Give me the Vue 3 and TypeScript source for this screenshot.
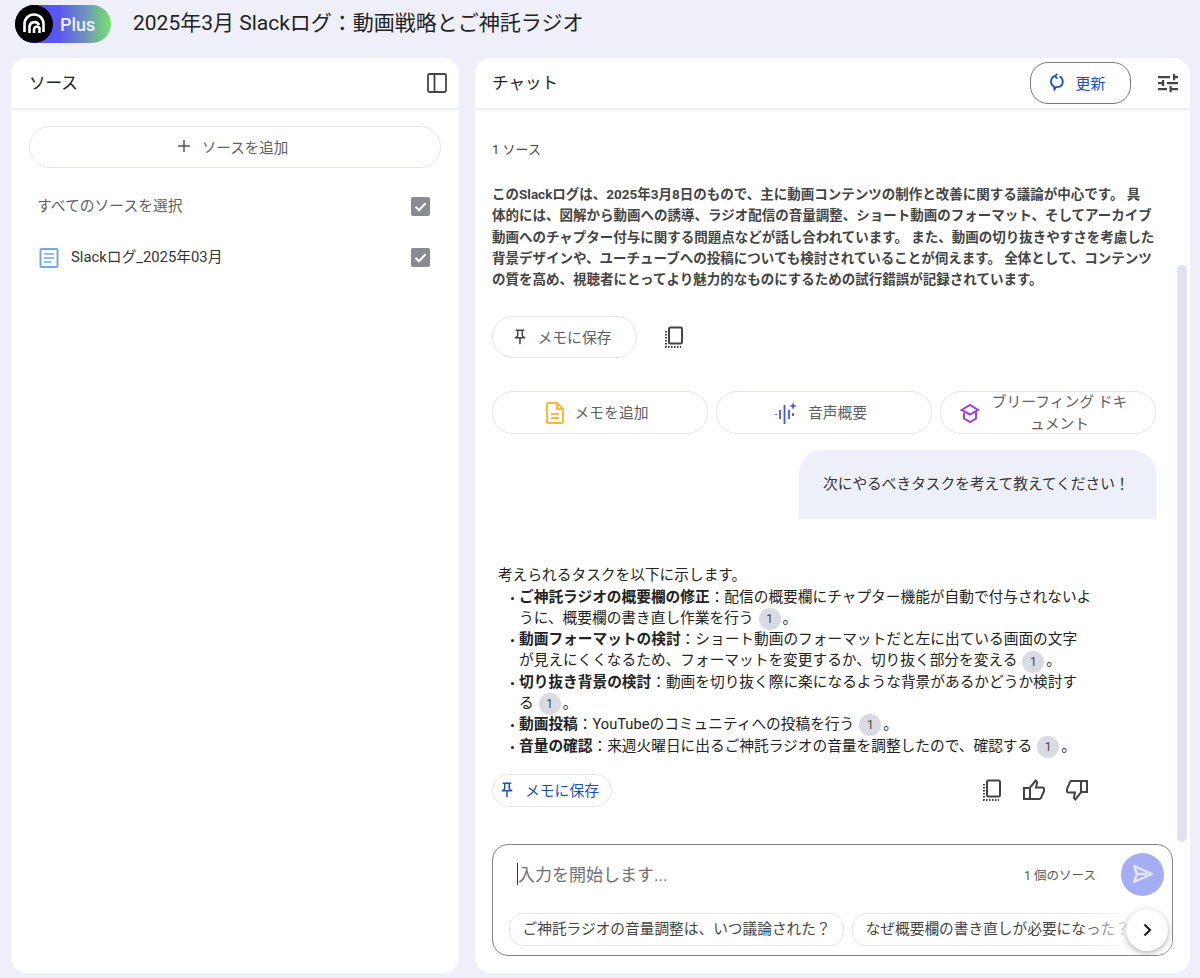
<script setup lang="ts">
interface Task {
  title: string
  lines: string[]
}

const summaryLines: string[] = [
  'このSlackログは、2025年3月8日のもので、主に動画コンテンツの制作と改善に関する議論が中心です。 具',
  '体的には、図解から動画への誘導、ラジオ配信の音量調整、ショート動画のフォーマット、そしてアーカイブ',
  '動画へのチャプター付与に関する問題点などが話し合われています。 また、動画の切り抜きやすさを考慮した',
  '背景デザインや、ユーチューブへの投稿についても検討されていることが伺えます。 全体として、コンテンツ',
  'の質を高め、視聴者にとってより魅力的なものにするための試行錯誤が記録されています。'
]

const tasks: Task[] = [
  {
    title: 'ご神託ラジオの概要欄の修正',
    lines: ['：配信の概要欄にチャプター機能が自動で付与されないよ', 'うに、概要欄の書き直し作業を行う']
  },
  {
    title: '動画フォーマットの検討',
    lines: ['：ショート動画のフォーマットだと左に出ている画面の文字', 'が見えにくくなるため、フォーマットを変更するか、切り抜く部分を変える']
  },
  {
    title: '切り抜き背景の検討',
    lines: ['：動画を切り抜く際に楽になるような背景があるかどうか検討す', 'る']
  },
  { title: '動画投稿', lines: ['：YouTubeのコミュニティへの投稿を行う'] },
  { title: '音量の確認', lines: ['：来週火曜日に出るご神託ラジオの音量を調整したので、確認する'] }
]
</script>

<template>
  <div class="page">
    <header class="topbar">
      <div class="logo">
        <span class="logo-mark">
          <svg width="24" height="22" viewBox="0 0 24 22" fill="none" stroke="#fff" stroke-width="2.600">
            <path d="M2.500 19v-8a9.500 9.500 0 0 1 19 0v8" />
            <path d="M7.500 20v-6.500a5 5 0 0 1 9.500-1.500" />
            <path d="M12 20v-3.500a3 3 0 0 1 5.500-1.500v5" />
          </svg>
        </span>
        <span class="logo-plus">Plus</span>
      </div>
      <h1 class="title">2025年3月 Slackログ：動画戦略とご神託ラジオ</h1>
    </header>

    <main class="columns">
      <section class="panel">
        <div class="panel-head">
          <span class="panel-title">ソース</span>
          <svg width="22" height="22" viewBox="0 0 22 22" fill="none" stroke="#444" stroke-width="1.800">
            <rect x="2" y="2" width="18" height="18" rx="1.500" />
            <path d="M8.500 2v18" />
          </svg>
        </div>
        <div class="sources">
          <button class="add-source">
            <svg width="14" height="14" viewBox="0 0 14 14" stroke="#555" stroke-width="1.500">
              <path d="M7 1v12M1 7h12" />
            </svg>
            <span>ソースを追加</span>
          </button>
          <div class="select-all">
            <span class="row-text">すべてのソースを選択</span>
            <span class="check">
              <svg width="19" height="19" viewBox="0 0 19 19" fill="none" stroke="#fff" stroke-width="2">
                <path d="M4.500 9.800l3.400 3.400 6.600-7" />
              </svg>
            </span>
          </div>
          <div class="source-row">
            <svg class="doc" width="22" height="22" viewBox="0 0 22 22" fill="none" stroke="#7ba3ec" stroke-width="2">
              <rect x="2.500" y="2" width="17" height="18" rx="1" />
              <path d="M6 7h10M6 11h10M6 15h7" stroke-width="1.600" />
            </svg>
            <span class="source-name row-text">Slackログ_2025年03月</span>
            <span class="check">
              <svg width="19" height="19" viewBox="0 0 19 19" fill="none" stroke="#fff" stroke-width="2">
                <path d="M4.500 9.800l3.400 3.400 6.600-7" />
              </svg>
            </span>
          </div>
        </div>
      </section>

      <section class="panel chat">
        <div class="panel-head chat-head">
          <span class="panel-title">チャット</span>
          <div class="head-actions">
            <button class="refresh">
              <svg width="18" height="18" viewBox="0 0 18 18" fill="none" stroke="#1d4fb8" stroke-width="1.800">
                <path d="M11.500 3.200A6 6 0 0 1 12 13.600l-4 .4-1.500 2.500-.6-3A6 6 0 0 1 6 3.200" />
                <path d="M9.500 .8L6.800 3.200l2.700 2.400" />
              </svg>
              <span>更新</span>
            </button>
            <svg class="tune" width="24" height="24" viewBox="0 0 24 24" fill="#444">
              <path d="M2 5h12v2.200H2zM17 3h2.200v2H22v2.200h-2.800v2H17zM2 11h4V9h2.200v6H6v-1.800H2zM11 11h11v2.200H11zM2 17h9v2.200H2zM13.500 15h2.200v2H22v2.200h-6.300v2h-2.200z" />
            </svg>
          </div>
        </div>

        <div class="chat-body">
          <div class="source-count">1 ソース</div>
          <div class="summary">
            <div v-for="line in summaryLines" :key="line">{{ line }}</div>
          </div>

          <div class="note-row">
            <button class="pill save">
              <svg width="18" height="18" viewBox="0 0 24 24" fill="#444">
                <path d="M14 4v5c0 1.120.370 2.160 1 3H9c.650-.860 1-1.900 1-3V4h4m3-2H7c-.550 0-1 .450-1 1s.450 1 1 1h1v5c0 1.660-1.340 3-3 3v2h5.970v7l1 1 1-1v-7H19v-2c-1.660 0-3-1.340-3-3V4h1c.550 0 1-.450 1-1s-.450-1-1-1z" />
              </svg>
              <span class="btn-text">メモに保存</span>
            </button>
            <svg class="copy-first" width="22" height="24" viewBox="0 0 22 24" fill="none" stroke="#444">
              <rect x="6" y="2.500" width="13" height="16" rx="1.500" stroke-width="2" />
              <path d="M3 6v16h15" stroke-width="2" stroke-dasharray="1.500 1.500" />
            </svg>
          </div>

          <div class="quick-actions">
            <button class="pill quick">
              <svg width="20" height="24" viewBox="0 0 20 24" fill="none" stroke="#f0bb3f" stroke-width="2">
                <path d="M3 2h9l6 6v13a1 1 0 0 1-1 1H3a1 1 0 0 1-1-1V3a1 1 0 0 1 1-1z" />
                <path d="M12 2v6h6M6 13h8M6 17h8" />
              </svg>
              <span class="btn-text">メモを追加</span>
            </button>
            <button class="pill quick">
              <svg width="24" height="24" viewBox="0 0 24 24" fill="none" stroke="#4658e0" stroke-width="1.800">
                <path d="M2 13v1M6 9v9M10.500 4v19M15 9v9M19 12v3" />
                <path d="M19 1l1 3 3 1-3 1-1 3-1-3-3-1 3-1z" fill="#4658e0" stroke="none" />
              </svg>
              <span class="btn-text">音声概要</span>
            </button>
            <button class="pill quick">
              <svg width="20" height="22" viewBox="0 0 20 22" fill="none" stroke="#a13ee0" stroke-width="2">
                <path d="M1.500 8L10 3l8 5-8 4.500z" />
                <path d="M4 11v5.500L10 20l6-3.500V9" />
              </svg>
              <span class="quick-long">ブリーフィング ドキュメント</span>
            </button>
          </div>

          <div class="bubble">次にやるべきタスクを考えて教えてください！</div>

          <div class="answer">
            <p class="answer-lead">考えられるタスクを以下に示します。</p>
            <ul class="task-list">
              <li v-for="task in tasks" :key="task.title">
                <div v-for="(line, i) in task.lines" :key="line">
                  <strong v-if="i === 0">{{ task.title }}</strong>{{ line }}<template v-if="i === task.lines.length - 1"><span class="cite">1</span>。</template>
                </div>
              </li>
            </ul>
          </div>

          <div class="answer-actions">
            <button class="pill save-blue">
              <svg width="18" height="18" viewBox="0 0 24 24" fill="#1d4fb8">
                <path d="M14 4v5c0 1.120.370 2.160 1 3H9c.650-.860 1-1.900 1-3V4h4m3-2H7c-.550 0-1 .450-1 1s.450 1 1 1h1v5c0 1.660-1.340 3-3 3v2h5.970v7l1 1 1-1v-7H19v-2c-1.660 0-3-1.340-3-3V4h1c.550 0 1-.450 1-1s-.450-1-1-1z" />
              </svg>
              <span class="btn-text">メモに保存</span>
            </button>
            <div class="answer-icons">
              <svg width="22" height="24" viewBox="0 0 22 24" fill="none" stroke="#444">
                <rect x="6" y="2.500" width="13" height="16" rx="1.500" stroke-width="2" />
                <path d="M3 6v16h15" stroke-width="2" stroke-dasharray="1.500 1.500" />
              </svg>
              <svg width="24" height="24" viewBox="0 0 24 24" fill="none" stroke="#444" stroke-width="2">
                <path d="M8 10H2v11h6zM8 21h9.500c.6 0 1.100-.4 1.400-.9l3-6.800c.1-.2.100-.5.100-.7V11a1.500 1.500 0 0 0-1.500-1.500h-6.500l1-4.600c.1-.5 0-1-.4-1.400L13.700 2.600 8 9.500z" />
              </svg>
              <svg class="flip" width="24" height="24" viewBox="0 0 24 24" fill="none" stroke="#444" stroke-width="2">
                <path d="M8 10H2v11h6zM8 21h9.500c.6 0 1.100-.4 1.400-.9l3-6.800c.1-.2.100-.5.100-.7V11a1.500 1.500 0 0 0-1.500-1.500h-6.500l1-4.600c.1-.5 0-1-.4-1.400L13.700 2.600 8 9.500z" />
              </svg>
            </div>
          </div>

          <div class="composer">
            <div class="composer-top">
              <span class="caret"></span>
              <span class="placeholder">入力を開始します...</span>
              <span class="composer-count">1 個のソース</span>
              <span class="send">
                <svg width="24" height="24" viewBox="0 0 24 24" fill="none" stroke="#e4e7fc" stroke-width="2.400" stroke-linejoin="round">
                  <path d="M3 4l18 8-18 8 3-8zM6 12h10" />
                </svg>
              </span>
            </div>
            <div class="suggestions">
              <span class="suggestion">ご神託ラジオの音量調整は、いつ議論された？</span>
              <span class="suggestion">なぜ概要欄の書き直しが必要になった？</span>
            </div>
            <div class="fade"></div>
            <span class="next">
              <svg width="16" height="16" viewBox="0 0 16 16" fill="none" stroke="#222" stroke-width="2.200">
                <path d="M5.500 2.500L11 8l-5.500 5.500" />
              </svg>
            </span>
          </div>
        </div>
        <div class="scrollbar"></div>
      </section>
    </main>
  </div>
</template>

<style scoped>
.page {
  height: 978px;
  display: flex;
  flex-direction: column;
  overflow: hidden;
  background: #eeeff9;
  font-family: Roboto, "Noto Sans CJK JP", sans-serif;
  color: #222;
}

button {
  font-family: inherit;
  background: #fff;
  cursor: pointer;
}

.topbar {
  height: 58px;
  padding: 5px 0 0 15px;
  box-sizing: border-box;
  display: flex;
  align-items: flex-start;
  gap: 22px;
}

.logo {
  width: 96px;
  height: 38px;
  display: flex;
  align-items: center;
  border-radius: 19px;
  background: linear-gradient(90deg, #5a55f5 45%, #6f8fc0 72%, #74e36c 100%);
}

.logo-mark {
  width: 38px;
  height: 38px;
  border-radius: 50%;
  background: #000;
  display: flex;
  align-items: center;
  justify-content: center;
}

.logo-plus {
  margin-left: 7px;
  font-size: 18px;
  font-weight: 500;
  color: #eef0ff;
}

.title {
  margin: 0;
  font-size: 21px;
  font-weight: 400;
  line-height: 36px;
  color: #222;
}

.columns {
  flex: 1;
  min-height: 0;
  display: grid;
  grid-template-columns: 448px 715px;
  gap: 16px;
  padding: 0 0 5px 11px;
}

.panel {
  position: relative;
  background: #fff;
  border-radius: 16px;
  overflow: hidden;
  display: flex;
  flex-direction: column;
}

.panel-head {
  height: 52px;
  box-sizing: border-box;
  border-bottom: 2px solid #eeeff5;
  padding: 0 11px 0 18px;
  display: flex;
  align-items: center;
  justify-content: space-between;
}

.panel-title {
  padding-bottom: 2px;
  font-size: 16.600px;
  color: #222;
}

.sources {
  padding: 16px 18px 0;
  display: flex;
  flex-direction: column;
}

.add-source {
  height: 42px;
  padding: 0 5px 2px 0;
  border: 1.500px solid #e4e5ea;
  border-radius: 21px;
  display: flex;
  align-items: center;
  justify-content: center;
  gap: 11px;
  font-size: 14.500px;
  color: #5f6064;
}

.select-all,
.source-row {
  display: flex;
  align-items: center;
  font-size: 14.800px;
  padding: 0 11px 0 8px;
}

.row-text {
  padding-bottom: 5px;
}

.select-all {
  margin-top: 29px;
  height: 19px;
  justify-content: space-between;
  color: #5f6064;
}

.source-row {
  margin-top: 32px;
  height: 19px;
}

.doc {
  margin: 0 11px 0 1px;
  flex: none;
}

.source-name {
  flex: 1;
  color: #333;
}

.check {
  width: 19px;
  height: 19px;
  border-radius: 2px;
  background: #8a8b91;
  display: block;
  flex: none;
}

.chat-head {
  padding: 0 9px 0 17px;
}

.head-actions {
  display: flex;
  align-items: center;
  gap: 26px;
}

.tune {
  position: relative;
  left: -1px;
}

.refresh {
  width: 101px;
  height: 42px;
  border: 1px solid #77787d;
  border-radius: 18px;
  padding: 0 7px 2px 0;
  display: flex;
  align-items: center;
  justify-content: center;
  gap: 9px;
  font-size: 15px;
  color: #1d4fb8;
}

.chat-body {
  flex: 1;
  min-height: 0;
  padding: 0 17px;
  display: flex;
  flex-direction: column;
}

.source-count {
  margin-top: 30px;
  font-size: 13px;
  line-height: 20px;
  color: #444;
}

.summary {
  margin-top: 24px;
  font-size: 13.500px;
  font-weight: 700;
  line-height: 21.250px;
  color: #444;
  white-space: nowrap;
}

.note-row {
  margin-top: 26px;
  display: flex;
  align-items: center;
  gap: 26px;
}

.pill {
  padding: 0 7px 0 0;
  border: 1.500px solid #e4e5ea;
  display: flex;
  align-items: center;
  justify-content: center;
  font-size: 14.800px;
  color: #5f6064;
}

.btn-text {
  padding-bottom: 2px;
}

.save {
  width: 145px;
  height: 42px;
  border-radius: 21px;
  gap: 9px;
}

.quick-actions {
  margin-top: 33px;
  width: 664px;
  display: grid;
  grid-template-columns: repeat(3, 1fr);
  gap: 8px;
}

.quick {
  height: 43px;
  border-radius: 21px;
  gap: 10px;
}

.quick-long {
  width: 140px;
  line-height: 22px;
}

.bubble {
  align-self: flex-start;
  margin: 16px 0 0 307px;
  width: 357px;
  height: 69px;
  box-sizing: border-box;
  padding: 0 24px;
  background: #edeff9;
  border-radius: 24px 24px 0 0;
  font-size: 14.700px;
  line-height: 68px;
  color: #333;
}

.answer {
  margin-top: 46px;
  padding-left: 6px;
  font-size: 14.700px;
  line-height: 21.300px;
  color: #222;
}

.answer-lead {
  margin: 0;
}

.task-list {
  margin: 0;
  padding: 0 0 0 21px;
  list-style: none;
  white-space: nowrap;
}

.task-list li {
  position: relative;
}

.task-list li::before {
  content: "";
  position: absolute;
  left: -8px;
  top: 10px;
  width: 3px;
  height: 3px;
  border-radius: 50%;
  background: #222;
}

.cite {
  display: inline-block;
  width: 22px;
  height: 22px;
  margin: -4px 2px -4px 5px;
  border-radius: 50%;
  background: #d9dbe3;
  font-size: 12px;
  line-height: 22px;
  text-align: center;
  vertical-align: middle;
  color: #444;
}

.answer-actions {
  margin-top: 17px;
  width: 597px;
  display: flex;
  align-items: center;
  justify-content: space-between;
}

.save-blue {
  width: 120px;
  height: 33px;
  border-radius: 17px;
  gap: 9px;
  color: #1d4fb8;
}

.answer-icons {
  display: flex;
  gap: 19px;
}

.flip {
  transform: rotate(180deg);
}

.composer {
  position: relative;
  margin-top: 37px;
  width: 681px;
  height: 112px;
  box-sizing: border-box;
  border: 1px solid #85868c;
  border-radius: 16px;
  overflow: hidden;
}

.composer-top {
  height: 59px;
  padding: 0 8px 0 24px;
  box-sizing: border-box;
  display: flex;
  align-items: center;
}

.caret {
  width: 1px;
  height: 22px;
  background: #333;
}

.placeholder {
  flex: 1;
  padding-bottom: 2px;
  font-size: 17px;
  color: #6f7075;
}

.composer-count {
  font-size: 12.500px;
  color: #555;
  margin-right: 25px;
}

.send {
  width: 43px;
  height: 43px;
  border-radius: 50%;
  background: #a5adf7;
  display: flex;
  align-items: center;
  justify-content: center;
}

.suggestions {
  margin-top: 9px;
  padding-left: 16px;
  display: flex;
  gap: 8px;
  white-space: nowrap;
}

.suggestion {
  height: 33px;
  box-sizing: border-box;
  padding: 0 12.500px;
  border: 1.500px solid #e4e5ea;
  border-radius: 14px;
  font-size: 14.700px;
  line-height: 30px;
  color: #444;
  flex: none;
}

.fade {
  position: absolute;
  right: 0;
  bottom: 0;
  width: 90px;
  height: 50px;
  background: linear-gradient(90deg, rgba(255, 255, 255, 0), #fff 60%);
}

.next {
  position: absolute;
  right: 4px;
  bottom: 4px;
  width: 42px;
  height: 42px;
  border-radius: 50%;
  background: #fff;
  box-shadow: 0 2px 6px rgba(0, 0, 0, 0.3);
  display: flex;
  align-items: center;
  justify-content: center;
}

.scrollbar {
  position: absolute;
  top: 207px;
  right: 3px;
  width: 10px;
  height: 577px;
  border-radius: 5px;
  background: #e0e2ed;
}
</style>

<style>
html,
body {
  background: #eeeff9;
}
</style>
